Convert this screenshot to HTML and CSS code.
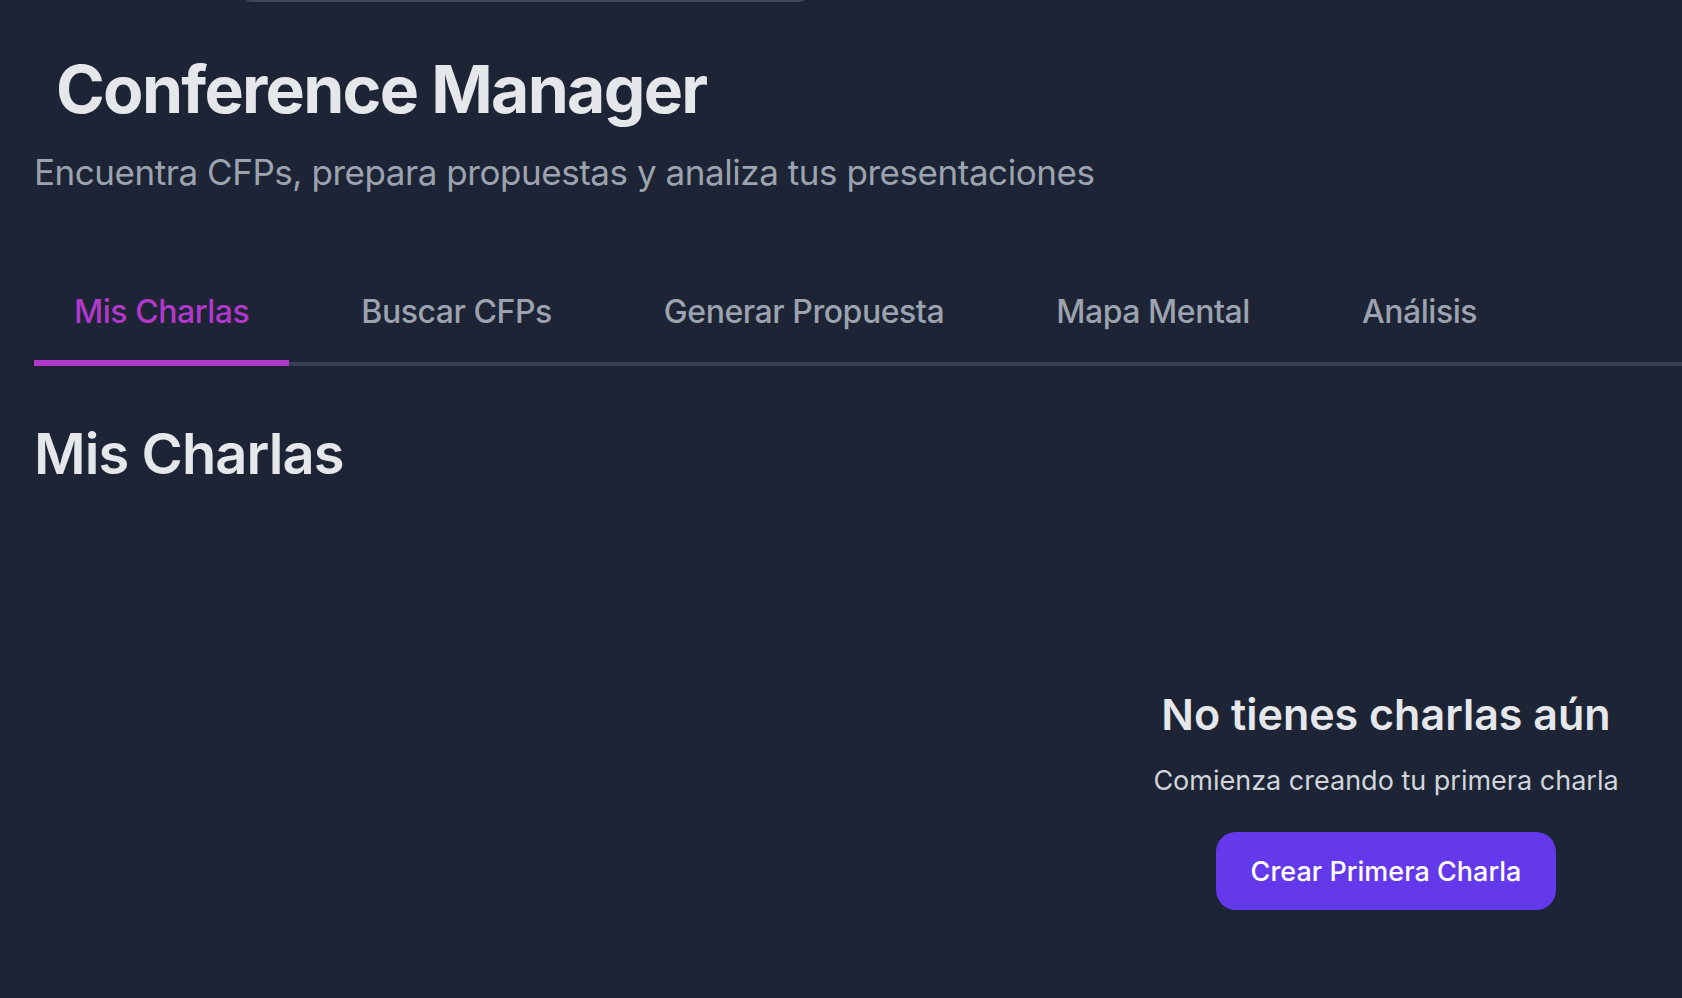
FILE: index.html
```html
<!DOCTYPE html>
<html lang="es">
<head>
<meta charset="utf-8">
<title>Conference Manager</title>
<link rel="stylesheet" href="styles.css">
</head>
<body>
<div class="page">
  <div class="topbar"></div>
  <header class="header">
    <h1 class="title">Conference Manager</h1>
    <p class="subtitle">Encuentra CFPs, prepara propuestas y analiza tus presentaciones</p>
  </header>
  <nav class="tabs">
    <button class="tab active">Mis Charlas</button>
    <button class="tab">Buscar CFPs</button>
    <button class="tab">Generar Propuesta</button>
    <button class="tab">Mapa Mental</button>
    <button class="tab">Análisis</button>
  </nav>
  <section class="section">
    <h2 class="section-title">Mis Charlas</h2>
    <div class="grid">
      <div class="empty">
        <h3 class="empty-title">No tienes charlas aún</h3>
        <p class="empty-text">Comienza creando tu primera charla</p>
        <button class="cta">Crear Primera Charla</button>
      </div>
    </div>
  </section>
</div>
</body>
</html>
```
FILE: styles.css
```css
* { box-sizing: border-box; }
html, body { margin: 0; padding: 0; }
body {
  background: #1c2435;
  font-family: Inter, "Noto Sans", sans-serif;
  color: #e5e7eb;
  height: 998px;
  overflow: hidden;
}
.page {
  padding-left: 34px;
}
.topbar {
  width: 574px;
  height: 40px;
  margin-top: -38px;
  margin-left: 204px;
  border: 2px solid #3f4654;
  border-radius: 14px;
}
.header {
  margin-top: 54px;
}
.title {
  margin: 0;
  padding-left: 22px;
  font-size: 66px;
  line-height: 1;
  font-weight: 700;
  color: #e5e7eb;
  letter-spacing: -1.7px;
}
.subtitle {
  margin: 33px 0 0;
  font-size: 35px;
  line-height: 1;
  font-weight: 400;
  color: #9ca3af;
  letter-spacing: -0.45px;
}
.tabs {
  margin-top: 74px;
  display: flex;
  gap: 32px;
  border-bottom: 4px solid #374151;
}
.tab {
  background: none;
  border: none;
  border-bottom: 6px solid transparent;
  margin-bottom: -4px;
  padding: 32px 40px 32px;
  font-family: inherit;
  font-size: 32px;
  line-height: 1;
  font-weight: 500;
  color: #9ca3af;
  letter-spacing: -0.45px;
}
.tab.active {
  color: #b238cc;
  border-bottom-color: #b238cc;
}
.section {
  padding-top: 60px;
}
.section-title {
  margin: 0;
  font-size: 56px;
  line-height: 1;
  font-weight: 600;
  color: #e5e7eb;
  letter-spacing: -0.9px;
}
.grid {
  display: grid;
  grid-template-columns: 1fr 480px;
  padding-right: 56px;
  margin-top: 211px;
}
.empty {
  grid-column: 2;
  display: flex;
  flex-direction: column;
  align-items: center;
  text-align: center;
}
.empty-title {
  margin: 0;
  font-size: 43px;
  line-height: 1;
  font-weight: 600;
  color: #e5e7eb;
}
.empty-text {
  margin: 31px 0 0;
  font-size: 27px;
  line-height: 1;
  color: #d1d5db;
}
.cta {
  margin-top: 38px;
  width: 340px;
  height: 78px;
  border: none;
  border-radius: 20px;
  background: #6439eb;
  color: #ffffff;
  font-family: inherit;
  font-size: 27px;
  font-weight: 500;
}
```
